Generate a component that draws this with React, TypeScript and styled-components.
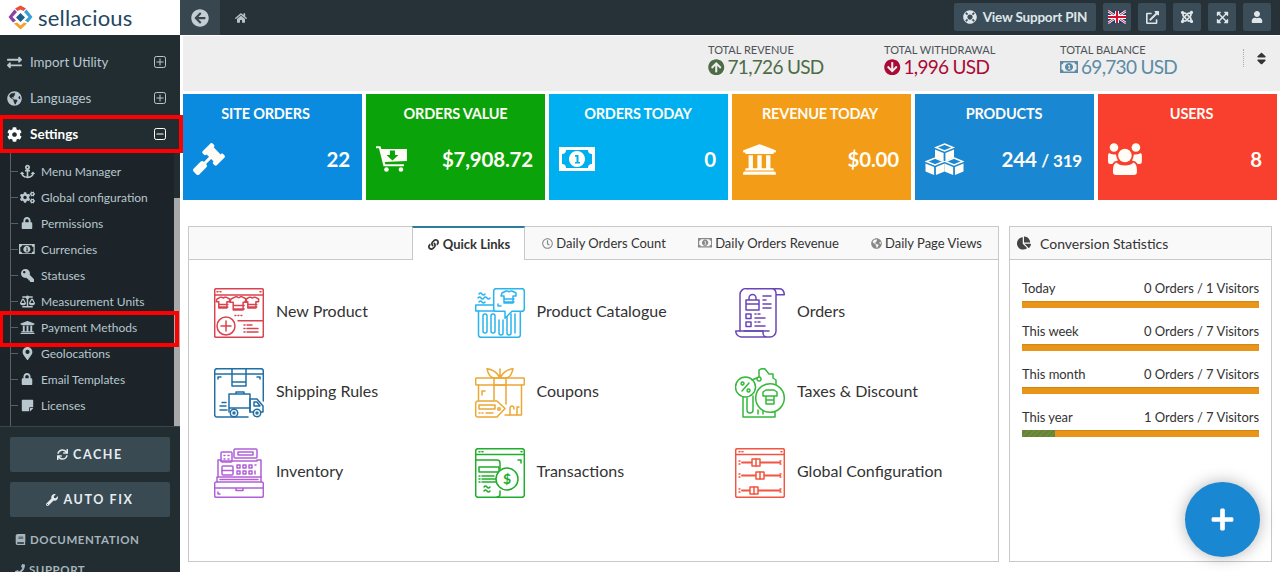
import React from "react";
import styled, { createGlobalStyle } from "styled-components";
import {
  FaAnchor, FaArrowCircleDown, FaArrowCircleLeft, FaArrowCircleUp, FaBalanceScale, FaBook, FaChartPie,
  FaCog, FaCogs, FaExchangeAlt, FaExpandArrowsAlt, FaExternalLinkAlt, FaGavel, FaGlobeAmericas, FaHome, FaJoomla,
  FaKey, FaLifeRing, FaLink, FaLock, FaMapMarkerAlt, FaPhone, FaPlus, FaRegClock,
  FaSort, FaStickyNote, FaSync, FaUniversity, FaUser, FaWrench,
} from "react-icons/fa";

const Global = createGlobalStyle`
  html, body { margin: 0; padding: 0; height: 100%; overflow: hidden; background: #fff; }
  body { font-family: Lato, "Noto Sans", sans-serif; color: #333; }
  * { box-sizing: border-box; }
`;

const Page = styled.div`display: flex; width: 1280px; height: 572px; overflow: hidden;`;
const Sidebar = styled.aside`width: 180px; flex: none; display: flex; flex-direction: column; background: #222d32; position: relative; z-index: 2;`;
const LogoBar = styled.div`height: 35px; background: #fff; display: flex; align-items: center; padding-left: 8px; gap: 5px;`;
const LogoText = styled.span`font-size: 22px; font-weight: 400; color: #24475f; letter-spacing: 0.2px; line-height: 1;`;
const Menu = styled.nav`height: 392px; flex: none; position: relative; padding-top: 9px; background: #222d32; border-bottom: 1px solid #3a464c;`;
const ScrollThumb = styled.div`position: absolute; right: 0; top: 163px; bottom: 0; width: 6px; background: #a9a9a9;`;
const TopItem = styled.div<{ $on?: boolean }>`
  height: 36px; width: 174px; display: flex; align-items: center; padding: 0 7px; position: relative;
  font-size: ${p => (p.$on ? "13.5px" : "13.3px")}; color: ${p => (p.$on ? "#fff" : "#b8c7ce")}; font-weight: ${p => (p.$on ? 700 : 400)};
  ${p => p.$on && `&::after { content: ""; position: absolute; z-index: 3; left: 0; right: -8.5px; top: -1px; bottom: -1px; border: 4px solid #fe0000; border-left-width: 3px; }`}
`;
const TopIcon = styled.span`width: 23px; display: flex; font-size: 15px; flex: none; color: inherit;`;
const TopLabel = styled.span`flex: 1;`;
const ToggleSvg = styled.svg`width: 12px; height: 12px; flex: none; fill: none; stroke: currentColor; stroke-width: 1; margin-right: 1px;`;
const SubList = styled.div`position: relative; background: #1c2429; padding-top: 6px; height: 274px; width: 174px;
  &::before { content: ""; position: absolute; left: 10px; top: 0; bottom: 0; width: 1px; background: #56626a; }`;
const SubItem = styled.div<{ $hl?: boolean }>`
  height: 26px; display: flex; align-items: center; position: relative; padding-left: 18px;
  font-size: 12px; color: #b8c7ce; white-space: nowrap;
  &::before { content: ""; position: absolute; left: 10px; top: 13px; width: 8px; height: 1px; background: #56626a; }
  ${p => p.$hl && `&::after { content: ""; position: absolute; z-index: 3; left: 0; right: -5px; top: -3px; bottom: -7px; border: 4px solid #fe0000; border-left-width: 3px; }`}
`;
const SubIcon = styled.span<{ $s: number }>`width: 18px; margin-right: 5px; display: flex; justify-content: center; font-size: ${p => p.$s}px; flex: none;`;
const FlippedKey = styled(FaKey)`transform: scaleX(-1);`;
const Foot = styled.div`flex: 1; padding: 10px 10px 0; overflow: hidden;`;
const FootButton = styled.div`height: 35px; background: #394a53; border-radius: 2px; margin-bottom: 10px; display: flex; align-items: center; justify-content: center; gap: 5px;
  color: #e6ecef; font-size: 12.5px; font-weight: 700; letter-spacing: 1.6px;`;
const FootLinks = styled.div`margin-top: -2px;`;
const FootLink = styled.div`display: flex; align-items: center; gap: 4px; height: 29.5px; padding-left: 5px; color: #a6b4bb; font-size: 11.5px; font-weight: 700; letter-spacing: .55px; white-space: nowrap;`;

const Main = styled.main`flex: 1; display: flex; flex-direction: column; min-width: 0; position: relative;`;
const TopBar = styled.header`height: 35px; background: #263138; display: flex; align-items: center;`;
const BackBtn = styled.div`width: 40px; height: 35px; background: #38474f; display: flex; align-items: center; justify-content: center; color: #c3ced4; font-size: 18px;`;
const HomeBtn = styled.div`margin-left: 15px; color: #b6c2c8; font-size: 12px; display: flex;`;
const TopRight = styled.div`margin-left: auto; display: flex; gap: 7px; padding: 0 9px 1px 0;`;
const TopBtn = styled.div`height: 28px; min-width: 28px; background: #3b4d58; border-radius: 2px; display: flex; align-items: center; justify-content: center; gap: 6px; color: #dfe6ea; font-size: 13.5px; font-weight: 700;`;
const PinBtn = styled(TopBtn)`width: 142px; letter-spacing: -0.2px;`;
const StatsBar = styled.section`height: 55px; margin: 1px 0 0 3px; background: #eee; position: relative; display: flex; padding-left: 525px;`;
const Stat = styled.div`width: 176px; padding-top: 8px;`;
const StatLabel = styled.div`font-size: 11px; line-height: 12px; color: #4d5357; text-transform: uppercase;`;
const StatValue = styled.div<{ $c: string }>`display: flex; align-items: center; gap: 3px; font-size: 19px; line-height: 22px; letter-spacing: -0.7px; color: ${p => p.$c}; white-space: nowrap;`;
const StatIcon = styled.span`display: flex; font-size: 16.5px;`;
const StatMoney = styled.span`display: flex; font-size: 12px;`;
const SortArea = styled.div`position: absolute; left: 1060px; top: 13px; height: 18px; border-left: 1px dotted #aaa; padding: 2px 0 0 10px; font-size: 15px; color: #333; display: flex; align-items: flex-start;`;
const Tiles = styled.section`display: grid; grid-template-columns: repeat(6, 179px); gap: 4px; margin: 3px 0 0 3px;`;
const Tile = styled.div<{ $bg: string; $pr: number }>`height: 106px; background: ${p => p.$bg}; color: #fffdf6; padding: 11px ${p => p.$pr}px 0 10px; display: flex; flex-direction: column;`;
const TileTitle = styled.div<{ $shift: number }>`text-align: center; font-size: 14.5px; line-height: 18px; font-weight: 700; text-transform: uppercase; letter-spacing: -0.2px;
  transform: translateX(${p => p.$shift}px); white-space: nowrap;`;
const TileRow = styled.div`display: flex; align-items: center; justify-content: space-between; margin-top: 16px; height: 40px;`;
const TileIcon = styled.span<{ $s: number }>`display: flex; font-size: ${p => p.$s}px;`;
const TileValue = styled.span`font-size: 20.5px; font-weight: 700; letter-spacing: -0.2px; white-space: nowrap;`;
const Small = styled.small`font-size: 17px; font-weight: 700;`;
const Panels = styled.section`display: flex; margin: 26px 0 0 8px; gap: 10px; height: 336px;`;
const Panel = styled.div<{ $w: number }>`width: ${p => p.$w}px; border: 1px solid #c9c9c9; display: flex; flex-direction: column;`;
const Tabs = styled.div`height: 33px; background: #f9f9f9; border-bottom: 1px solid #c9c9c9; display: flex; justify-content: flex-end;`;
const Tab = styled.div<{ $on?: boolean }>`height: ${p => (p.$on ? "34px" : "32px")}; margin-top: ${p => (p.$on ? "-1px" : "0")}; display: flex; align-items: center; gap: 3px; padding: 0 16px;
  font-size: 13px; color: #333; white-space: nowrap; position: relative;
  ${p => p.$on && `background: #fff; border: 1px solid #c9c9c9; border-top: 2px solid #2b7d9b; border-bottom: 0; font-weight: 700; padding: 0 14px 0 15px; gap: 4px; margin-right: 1px;`}`;
const TabIcon = styled.span<{ $on?: boolean }>`display: flex; font-size: 11px; color: ${p => (p.$on ? "#333" : "#888")};`;
const TabMoney = styled(TabIcon)`font-size: 9.5px;`;
const LinkGrid = styled.div`display: grid; grid-template-columns: repeat(3, 260.5px); grid-auto-rows: 80px; padding: 28px 0 0 25px;`;
const LinkItem = styled.div`display: flex; align-items: flex-start; gap: 12px; font-size: 16px; color: #333;`;
const LinkLabel = styled.span`line-height: 46px;`;
const PanelHead = styled.div`height: 33px; background: #f9f9f9; border-bottom: 1px solid #c9c9c9; display: flex; align-items: center; gap: 9px; padding-left: 7px; font-size: 14px; color: #333;`;
const HeadIcon = styled.span`display: flex; font-size: 14px; color: #444;`;
const StatRows = styled.div`padding: 20px 12px 0;`;
const Row = styled.div`height: 43px;`;
const RowText = styled.div`display: flex; justify-content: space-between; font-size: 13px; line-height: 16px; height: 21px; color: #333; letter-spacing: -0.05px;`;
const Track = styled.div`height: 7px; background: #e8951a; box-shadow: inset 0 1px 1px rgba(0,0,0,.1);`;
const Fill = styled.div`height: 100%; background: repeating-linear-gradient(135deg, #6c8c3a 0 2px, #648338 2px 4px);`;
const Fab = styled.div`position: absolute; left: 1005px; top: 482px; width: 75px; height: 75px; border-radius: 50%; background: #1a87d2; color: #fff; font-size: 25px; display: flex; align-items: center; justify-content: center; box-shadow: 0 0 16px rgba(0,0,0,.3);`;
const IconSvg = styled.svg`flex: none; width: 50px; height: 50px; fill: none; stroke-width: 1.5; stroke-linecap: round; stroke-linejoin: round;`;
const GlyphSvg = styled.svg`display: block; height: 1em; fill: currentColor;`;

const Toggle = ({ minus }: { minus?: boolean }) => (
  <ToggleSvg viewBox="0 0 12 12">
    <rect x=".5" y=".5" width="11" height="11" rx="1.800" />
    <path d={minus ? "M2.500 6h7" : "M2.500 6h7M6 2.500v7"} />
  </ToggleSvg>
);

const Money = () => (
  <GlyphSvg viewBox="0 0 36 24" width="1.5em">
    <path fillRule="evenodd" d="M0 0H36V24H0ZM7 3Q7 7 3 7V17Q7 17 7 21H29Q29 17 33 17V7Q29 7 29 3ZM18 4a8 8 0 1 1-.01 0ZM16 8v1.800h1.500V15H16v1.500h5V15h-1.500V8Z" />
  </GlyphSvg>
);

const CartIcon = () => (
  <GlyphSvg viewBox="0 0 31 26" width="1.19em">
    <path fillRule="evenodd" d="M0 .3H4.500L5.300 3H31V15L8.800 16L9.300 18.300H28V20.300H7.500L3 2.300H0ZM14 4.500V9H10.500L16.500 14.500L22.500 9H19V4.500Z" />
    <circle cx="10.500" cy="23.500" r="2.300" /><circle cx="25" cy="23.500" r="2.300" />
  </GlyphSvg>
);

const cube = (cx: number, top: number) => {
  const r = 9.5, g = .9;
  return (
    <g key={cx + "-" + top}>
      <path d={`M${cx} ${top + 1}L${cx + r - 1} ${top + 4.500}L${cx} ${top + 8}L${cx - r + 1} ${top + 4.500}Z`} fill="none" stroke="currentColor" strokeWidth="1.500" />
      <path d={`M${cx - r} ${top + 6.500}L${cx - g} ${top + 10}V${top + 18}L${cx - r} ${top + 14.500}Z`} />
      <path d={`M${cx + r} ${top + 6.500}L${cx + g} ${top + 10}V${top + 18}L${cx + r} ${top + 14.500}Z`} />
    </g>
  );
};
const CubesIcon = () => (
  <GlyphSvg viewBox="0 0 39 32" width="1.22em">
    {cube(19.5, 0)}{cube(10, 14)}{cube(29, 14)}
  </GlyphSvg>
);

const UsersIcon = () => (
  <GlyphSvg viewBox="0 0 34 32" width="1.06em">
    <circle cx="17" cy="12.500" r="6.800" />
    <path d="M8.500 19.500Q11 22.500 17 22.500T25.500 19.500Q29 21 29 27V29Q29 32 26 32H8Q5 32 5 29V27Q5 21 8.500 19.500Z" />
    <circle cx="6" cy="4.500" r="4.300" /><circle cx="28" cy="4.500" r="4.300" />
    <path d="M1 10Q3 11.500 6 11.500L8 11.500Q8.500 15 10 17.500Q6 18 4.200 21H2Q0 21 0 18V13Q0 11 1 10ZM33 10Q31 11.500 28 11.500L26 11.500Q25.500 15 24 17.500Q28 18 29.800 21H32Q34 21 34 18V13Q34 11 33 10Z" />
  </GlyphSvg>
);

const Logo = () => (
  <svg width="25" height="25" viewBox="0 0 25 25">
    <path d="M7 3.500 L12.500 .5 L18 3.500 L15.500 6 L12.500 4.500 L9.500 6Z" fill="#e8503a" />
    <path d="M6.500 4.500 L.5 12 L5 17.500 L8 15.500 L4.500 12 L9 7Z" fill="#8e3fa8" />
    <path d="M18.500 4.500 L24.500 12 L20 17.500 L17 15.500 L20.500 12 L16 7Z" fill="#3aa0d8" />
    <path d="M6 18.500 L12.500 24.500 L19 18.500 L16 17.500 L12.500 20.500 L9 17.500Z" fill="#f2a030" />
    <path d="M12.500 8 L17 12.500 L12.500 17 L8 12.500Z" fill="#1f5f8e" />
  </svg>
);

const UkFlag = () => (
  <svg width="18" height="14" viewBox="0 0 60 40">
    <rect width="60" height="40" fill="#1f3a7d" />
    <path d="M0 0 L60 40 M60 0 L0 40" stroke="#fff" strokeWidth="8" />
    <path d="M0 0 L60 40 M60 0 L0 40" stroke="#cf142b" strokeWidth="3" />
    <path d="M30 0 V40 M0 20 H60" stroke="#fff" strokeWidth="13" />
    <path d="M30 0 V40 M0 20 H60" stroke="#cf142b" strokeWidth="7" />
  </svg>
);

const shirt = (x: number, y: number, s = 1) =>
  `M${x} ${y} l${4 * s} ${-2 * s} h${1.5 * s} q${1.5 * s} ${1.5 * s} ${3 * s} 0 h${1.5 * s} l${4 * s} ${2 * s} v${3 * s} h${-3 * s} v${7 * s} h${-9 * s} v${-7 * s} h${-3 * s}z M${x + 3 * s} ${y + 6 * s} h${9 * s} M${x + 3 * s} ${y + 9 * s} h${9 * s}`;

const NewProduct = () => (
  <IconSvg viewBox="0 0 50 50" stroke="#d9434f">
    <rect x=".7" y=".7" width="48.6" height="48.6" rx="1.5" />
    <path d="M1 7H49M3 3.8h1M6 3.8h1M46 3.8h1" />
    <path d={shirt(3, 11, .9)} /><path d={shirt(17, 11, 1.1)} /><path d={shirt(32, 11, .9)} />
    <path d="M21 27.5h.8M24 27.5h.8M27 27.5h.8M24 32.7H49" />
    <circle cx="12" cy="38" r="9" /><path d="M12 33v10M7 38h10" />
    <path d="M30 37h1M33 37h5M30 40.5h1M30 44h1M33 40.5h11M33 44h11" />
  </IconSvg>
);
const Shipping = () => (
  <IconSvg viewBox="0 0 50 50" stroke="#1f6fa5">
    <path d="M34 49H3a2.300 2.300 0 0 1-2.300-2.300V3A2.300 2.300 0 0 1 3 .7h44A2.300 2.300 0 0 1 49.300 3v30" />
    <path d="M1 6H49M18 1v17h14V1M18 14h14M4 11v-2h3M46 11v-2h-3" />
    <path d="M15 44V26h21v18M22 26v-2h8v2M15 40h21" />
    <path d="M36 31h7l6 7v6H36z" /><path d="M40 34h3l3 4h-6z" />
    <circle cx="20" cy="45" r="3.700" fill="#fff" /><circle cx="43" cy="45" r="3.700" fill="#fff" /><circle cx="20" cy="45" r="1" /><circle cx="43" cy="45" r="1" />
    <path d="M8 34.500h4M6 38h6M6 42h7" />
  </IconSvg>
);
const Inventory = () => (
  <IconSvg viewBox="0 0 50 50" stroke="#b05fd8">
    <rect x=".7" y="34" width="48.600" height="15.300" rx="1.500" />
    <path d="M.7 40H49.300M22 40v2.500h7V40M4 44v2h2" />
    <path d="M3 34v-5h44v5M6 31.500H44" />
    <path d="M4 29V12h3M47 29V12h-4M7 13H43" />
    <rect x="7" y="4" width="11" height="10" rx="1" /><path d="M10 7.500h1M14 7.500h1M10 11h1M14 11h1" />
    <rect x="20" y="1" width="23" height="9" rx="1" /><rect x="24" y="4" width="15" height="3" />
    <rect x="8" y="18" width="11" height="9" rx="1" /><path d="M8 22.500h11" />
    <path d="M23 17h3v3h-3zM29 17h3v3h-3zM35 17h3v3h-3zM41 17h1M23 23h3v3h-3zM29 23h3v3h-3zM35 23h3v3h-3zM41 23v3" />
  </IconSvg>
);
const Catalogue = () => (
  <IconSvg viewBox="0 0 50 50" stroke="#2ab4ee">
    <path d="M19 17H.7v6H21M30 23h3M41 23h5" />
    <path d="M3.500 23v24a2.300 2.300 0 0 0 2.300 2.300H43a2.300 2.300 0 0 0 2.300-2.300V24" />
    <rect x="8" y="26" width="4" height="19" rx="2" /><rect x="16" y="26" width="4" height="19" rx="2" /><path d="M24 32v13a2 2 0 0 0 4 0V32M32 26v19a2 2 0 0 0 4 0V26M40 26v19" />
    <path d="M21 .7h26a2.300 2.300 0 0 1 2.300 2.300v18a2.300 2.300 0 0 1-2.300 2.300H37l-7 7v-7h-9a2.300 2.300 0 0 1-2.300-2.300V3A2.300 2.300 0 0 1 21 .7z" fill="#fff" />
    <path d={shirt(27, 5, 1)} />
    <path d="M23 18v-2M23 18h3" />
    <path d="M4 6q1.500-2 3 0t3 0M3 10q1.500-2 3 0t3 0q1.500-2 3 0t3 0M4 14q1.500-2 3 0t3 0" />
  </IconSvg>
);
const Coupons = () => (
  <IconSvg viewBox="0 0 50 50" stroke="#eba835">
    <path d="M25 10C22 3 15 1 12 .7c1 5 3 9 7 9.300h12c4-.300 6-4.300 7-9.300-3 .300-10 2.300-13 9.300zM25 1v9" />
    <rect x=".7" y="10" width="48.600" height="7" rx="1" />
    <path d="M3.500 17v16M46.500 17v30H30M19 10v22M31 10v26M19 17h12M7 27v-4h3" />
    <path d="M35 47v-6q0-3 2-3t2 3M42 47v-8h2" />
    <path d="M3 33h19l8 7.500-8 8.500H3a2.300 2.300 0 0 1-2.300-2.300V35.300A2.300 2.300 0 0 1 3 33z" fill="#fff" />
    <path d="M4 37h16v4H4zM4 45h1M7 45h1M11 45h7" /><circle cx="24" cy="41" r="1.300" />
  </IconSvg>
);
const Transactions = () => (
  <IconSvg viewBox="0 0 50 50" stroke="#1fae2a">
    <path d="M3 .7h44a2.300 2.300 0 0 1 2.300 2.300v44a2.300 2.300 0 0 1-2.300 2.300H3A2.300 2.300 0 0 1 .7 47V3A2.300 2.300 0 0 1 3 .7z" />
    <path d="M1 6.500H49M4 3.700h1M7 3.700h1M46 3.700h1M43 12h3v3" />
    <path d="M1 12h21a3 3 0 0 1 3 3v6M25 43v3a3 3 0 0 1-3 3" />
    <path d="M4 19h20v5H4zM4 28h1M7 28h12M4 31h1M7 31h14M4 34h1M7 34h14" />
    <path d="M9 39q1.500-2 3 0t3 0M9 43q1.500-2 3 0t3 0" />
    <circle cx="32" cy="31" r="11" fill="#fff" />
    <text x="32" y="36" textAnchor="middle" fontSize="14" fontFamily="Lato, sans-serif" fontWeight="700" fill="#1fae2a" stroke="none">$</text>
  </IconSvg>
);
const Orders = () => (
  <IconSvg viewBox="0 0 50 50" stroke="#6a45b8">
    <path d="M12 .7H44q5 0 5.300 6H41V5q-.500-4.300-4-4.300M41 5v38a6 6 0 0 1-6 6H6Q1 48 .7 43H28v2a4 4 0 0 0 4 4" />
    <path d="M5 43V7a6 6 0 0 1 7-6.300" />
    <path d="M11 12h13v10H11zM14 12v-2a3.500 3.500 0 0 1 7 0v2M11 16h13M28 8h8M28 12h3M28 16h8M28 20h8" />
    <rect x="11" y="26" width="5" height="4.500" /><rect x="11" y="34" width="5" height="4.500" />
    <path d="M20 26h1M23 26h2M20 30h10M20 34h1M23 34h2M20 38h10M9 43h25" />
  </IconSvg>
);
const Taxes = () => (
  <IconSvg viewBox="0 0 50 50" stroke="#35b83c">
    <circle cx="10.500" cy="19" r="10" /><path d="M14 15l-7 8" /><circle cx="7.500" cy="15.500" r="1.500" /><circle cx="13.500" cy="22.500" r="1.500" />
    <path d="M17 12l7-3V2q3-2 6-1l4 5h4v4l3 2v5M24 9a2 2 0 1 0 .100 0" />
    <path d="M8 29v20h32v-5M12 30v12q0 3 3 3t3-3V28M23 42v4M28 40v6" />
    <circle cx="35" cy="30" r="14.300" fill="#fff" />
    <path d="M28 24l3-2h8l3 2v4h-3v8h-8v-8h-3zM31 28h8M31 32h8" />
  </IconSvg>
);
const GlobalCfg = () => (
  <IconSvg viewBox="0 0 50 50" stroke="#f25540">
    <rect x=".7" y=".7" width="48.600" height="48.600" rx="1.500" />
    <path d="M1 6.500H49M4 3.700h1M7 3.700h1M46 3.700h1" />
    <path d="M4 13h1M4 16h1M45 13h1M45 16h1M4 26h1M4 29h1M45 26h1M45 29h1M4 41h1M4 44h1M45 41h1M45 44h1" />
    <path d="M7 14.500h38M7 27.500h38M7 42.500h38" strokeWidth="2" />
    <g fill="#fff"><rect x="17" y="11" width="8" height="7" /><rect x="21" y="24" width="8" height="7" /><rect x="15" y="39" width="8" height="7" /></g>
    <path d="M21 11v7M25 24v7M19 39v7" />
  </IconSvg>
);

const subs = [
  [FaAnchor, "Menu Manager", 15], [FaCogs, "Global configuration", 15], [FaLock, "Permissions", 12], [Money, "Currencies", 10.5], [FlippedKey, "Statuses", 13],
  [FaBalanceScale, "Measurement Units", 15], [FaUniversity, "Payment Methods", 15], [FaMapMarkerAlt, "Geolocations", 13], [FaLock, "Email Templates", 12], [FaStickyNote, "Licenses", 13],
] as const;

const tiles = [
  { t: "Site Orders", bg: "#0b8be0", I: FaGavel, s: 32, shift: -6, pr: 12, v: <>22</> },
  { t: "Orders Value", bg: "#0aa30a", I: CartIcon, s: 26, shift: 1, pr: 12, v: <>$7,908.72</> },
  { t: "Orders Today", bg: "#00aff0", I: Money, s: 24, shift: .5, pr: 12, v: <>0</> },
  { t: "Revenue Today", bg: "#f39c18", I: FaUniversity, s: 35, shift: -.5, pr: 12, v: <>$0.00</> },
  { t: "Products", bg: "#1a87d2", I: CubesIcon, s: 32, shift: .5, pr: 12, v: <>244 <Small>/ 319</Small></> },
  { t: "Users", bg: "#f93f2d", I: UsersIcon, s: 32, shift: 6.5, pr: 15, v: <>8</> },
];

const links = [
  [NewProduct, "New Product"], [Catalogue, "Product Catalogue"], [Orders, "Orders"],
  [Shipping, "Shipping Rules"], [Coupons, "Coupons"], [Taxes, "Taxes & Discount"],
  [Inventory, "Inventory"], [Transactions, "Transactions"], [GlobalCfg, "Global Configuration"],
] as const;

const rows = [
  ["Today", "0 Orders / 1 Visitors", 0], ["This week", "0 Orders / 7 Visitors", 0],
  ["This month", "0 Orders / 7 Visitors", 0], ["This year", "1 Orders / 7 Visitors", 14],
] as const;

export default function App() {
  return (
    <Page>
      <Global />
      <Sidebar>
        <LogoBar><Logo /><LogoText>sellacious</LogoText></LogoBar>
        <Menu>
          <TopItem><TopIcon><FaExchangeAlt /></TopIcon><TopLabel>Import Utility</TopLabel><Toggle /></TopItem>
          <TopItem><TopIcon><FaGlobeAmericas /></TopIcon><TopLabel>Languages</TopLabel><Toggle /></TopItem>
          <TopItem $on><TopIcon><FaCog /></TopIcon><TopLabel>Settings</TopLabel><Toggle minus /></TopItem>
          <SubList>
            {subs.map(([I, l, s]) => (
              <SubItem key={l} $hl={l === "Payment Methods"}><SubIcon $s={s}><I /></SubIcon>{l}</SubItem>
            ))}
          </SubList>
          <ScrollThumb />
        </Menu>
        <Foot>
          <FootButton><FaSync size={11} />CACHE</FootButton>
          <FootButton><FaWrench size={12} />AUTO FIX</FootButton>
          <FootLinks>
            <FootLink><FaBook size={11} />DOCUMENTATION</FootLink>
            <FootLink><FaPhone size={10} />SUPPORT</FootLink>
          </FootLinks>
        </Foot>
      </Sidebar>
      <Main>
        <TopBar>
          <BackBtn><FaArrowCircleLeft /></BackBtn>
          <HomeBtn><FaHome /></HomeBtn>
          <TopRight>
            <PinBtn><FaLifeRing size={14} />View Support PIN</PinBtn>
            <TopBtn><UkFlag /></TopBtn>
            <TopBtn><FaExternalLinkAlt size={13} /></TopBtn>
            <TopBtn><FaJoomla size={14} /></TopBtn>
            <TopBtn><FaExpandArrowsAlt size={13} /></TopBtn>
            <TopBtn><FaUser size={12} /></TopBtn>
          </TopRight>
        </TopBar>
        <StatsBar>
          <Stat><StatLabel>Total Revenue</StatLabel><StatValue $c="#4d6b45"><StatIcon><FaArrowCircleUp /></StatIcon>71,726 USD</StatValue></Stat>
          <Stat><StatLabel>Total Withdrawal</StatLabel><StatValue $c="#ab0a36"><StatIcon><FaArrowCircleDown /></StatIcon>1,996 USD</StatValue></Stat>
          <Stat><StatLabel>Total Balance</StatLabel><StatValue $c="#5c8ba6"><StatMoney><Money /></StatMoney>69,730 USD</StatValue></Stat>
          <SortArea><FaSort /></SortArea>
        </StatsBar>
        <Tiles>
          {tiles.map(({ t, bg, I, s, shift, pr, v }) => (
            <Tile key={t} $bg={bg} $pr={pr}>
              <TileTitle $shift={shift}>{t}</TileTitle>
              <TileRow><TileIcon $s={s}><I /></TileIcon><TileValue>{v}</TileValue></TileRow>
            </Tile>
          ))}
        </Tiles>
        <Panels>
          <Panel $w={811}>
            <Tabs>
              <Tab $on><TabIcon $on><FaLink /></TabIcon>Quick Links</Tab>
              <Tab><TabIcon><FaRegClock /></TabIcon>Daily Orders Count</Tab>
              <Tab><TabMoney><Money /></TabMoney>Daily Orders Revenue</Tab>
              <Tab><TabIcon><FaGlobeAmericas /></TabIcon>Daily Page Views</Tab>
            </Tabs>
            <LinkGrid>
              {links.map(([I, l]) => (
                <LinkItem key={l}><I /><LinkLabel>{l}</LinkLabel></LinkItem>
              ))}
            </LinkGrid>
          </Panel>
          <Panel $w={263}>
            <PanelHead><HeadIcon><FaChartPie /></HeadIcon>Conversion Statistics</PanelHead>
            <StatRows>
              {rows.map(([a, b, w]) => (
                <Row key={a}>
                  <RowText><span>{a}</span><span>{b}</span></RowText>
                  <Track>{w > 0 && <Fill style={{ width: `${w}%` }} />}</Track>
                </Row>
              ))}
            </StatRows>
          </Panel>
        </Panels>
        <Fab><FaPlus /></Fab>
      </Main>
    </Page>
  );
}
